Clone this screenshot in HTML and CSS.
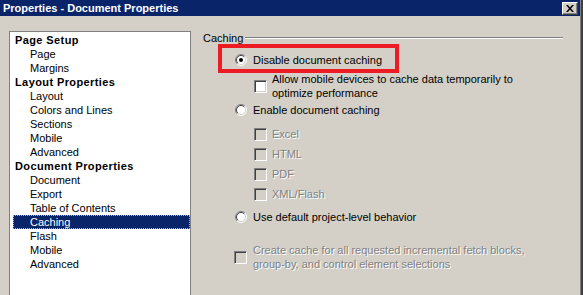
FILE: index.html
```html
<!DOCTYPE html>
<html lang="en">
<head>
  <meta charset="UTF-8">
  <title>Properties - Document Properties</title>
  <link rel="stylesheet" href="styles.css">
</head>
<body>

  <div class="window">
    <div class="titlebar">
      <span class="title">Properties - Document Properties</span>
      <span class="close">
        <svg width="8" height="7" viewBox="0 0 8 7">
          <path d="M0 0h2l2 2.5L6 0h2L5 3.5 8 7H6L4 4.5 2 7H0l3-3.5z" fill="#000"/>
        </svg>
      </span>
    </div>

    <div class="content">
      <ul class="nav">
        <li class="group">Page Setup</li>
        <li>Page</li>
        <li>Margins</li>
        <li class="group">Layout Properties</li>
        <li>Layout</li>
        <li>Colors and Lines</li>
        <li>Sections</li>
        <li>Mobile</li>
        <li>Advanced</li>
        <li class="group">Document Properties</li>
        <li>Document</li>
        <li>Export</li>
        <li>Table of Contents</li>
        <li class="selected">Caching</li>
        <li>Flash</li>
        <li>Mobile</li>
        <li>Advanced</li>
      </ul>

      <div class="panel">
        <div class="legend">
          <span>Caching</span>
          <span class="rule"></span>
        </div>

        <!-- red annotation box drawn over the first option -->
        <div class="mark"></div>

        <div class="option radio-row first">
          <svg class="radio" width="12" height="12" viewBox="0 0 12 12">
            <circle cx="6" cy="6" r="5" fill="#fff"/>
            <path d="M2.1 9.9A5.5 5.5 0 0 1 9.9 2.1" fill="none" stroke="#808080"/>
            <path d="M9.9 2.1A5.5 5.5 0 0 1 2.1 9.9" fill="none" stroke="#fff"/>
            <path d="M2.8 9.2A4.5 4.5 0 0 1 9.2 2.8" fill="none" stroke="#404040"/>
            <path d="M9.2 2.8A4.5 4.5 0 0 1 2.8 9.2" fill="none" stroke="#d4d0c8"/>
            <circle cx="6" cy="6" r="2" fill="#000"/>
          </svg>
          <span>Disable document caching</span>
        </div>

        <div class="option check-row sub allow">
          <span class="box"></span>
          <span>Allow mobile devices to cache data temporarily to<br>optimize performance</span>
        </div>

        <div class="option radio-row enable">
          <svg class="radio" width="12" height="12" viewBox="0 0 12 12">
            <circle cx="6" cy="6" r="5" fill="#fff"/>
            <path d="M2.1 9.9A5.5 5.5 0 0 1 9.9 2.1" fill="none" stroke="#808080"/>
            <path d="M9.9 2.1A5.5 5.5 0 0 1 2.1 9.9" fill="none" stroke="#fff"/>
            <path d="M2.8 9.2A4.5 4.5 0 0 1 9.2 2.8" fill="none" stroke="#404040"/>
            <path d="M9.2 2.8A4.5 4.5 0 0 1 2.8 9.2" fill="none" stroke="#d4d0c8"/>
          </svg>
          <span>Enable document caching</span>
        </div>

        <div class="formats">
          <div class="option check-row sub disabled"><span class="box"></span><span>Excel</span></div>
          <div class="option check-row sub disabled"><span class="box"></span><span>HTML</span></div>
          <div class="option check-row sub disabled"><span class="box"></span><span>PDF</span></div>
          <div class="option check-row sub disabled"><span class="box"></span><span>XML/Flash</span></div>
        </div>

        <div class="option radio-row usedefault">
          <svg class="radio" width="12" height="12" viewBox="0 0 12 12">
            <circle cx="6" cy="6" r="5" fill="#fff"/>
            <path d="M2.1 9.9A5.5 5.5 0 0 1 9.9 2.1" fill="none" stroke="#808080"/>
            <path d="M9.9 2.1A5.5 5.5 0 0 1 2.1 9.9" fill="none" stroke="#fff"/>
            <path d="M2.8 9.2A4.5 4.5 0 0 1 9.2 2.8" fill="none" stroke="#404040"/>
            <path d="M9.2 2.8A4.5 4.5 0 0 1 2.8 9.2" fill="none" stroke="#d4d0c8"/>
          </svg>
          <span>Use default project-level behavior</span>
        </div>

        <div class="option check-row disabled create">
          <span class="box"></span>
          <span>Create cache for all requested incremental fetch blocks,<br>group-by, and control element selections</span>
        </div>
      </div>
    </div>
  </div>

</body>
</html>
```

FILE: styles.css
```css
html, body {
  margin: 0;
  padding: 0;
}
body {
  font-family: "Liberation Sans", Arial, sans-serif;
  font-size: 11px;
  line-height: 14px;
  color: #000;
  background: #d4d0c8;
}
.window {
  width: 583px;
  height: 295px;
  box-sizing: border-box;
  overflow: hidden;
  background: #d4d0c8;
  border-right: 2px solid #404040;
  box-shadow: inset -1px 0 #808080;
}
.titlebar {
  height: 16px;
  margin-right: 1px;
  background: #0a246a;
  color: #fff;
  display: flex;
  align-items: center;
  justify-content: space-between;
  padding-left: 3px;
  padding-right: 2px;
}
.title {
  font-weight: bold;
  font-size: 11px;
}
.close {
  width: 16px;
  height: 13px;
  box-sizing: border-box;
  background: #d4d0c8;
  border: 1px solid;
  border-color: #fff #404040 #404040 #fff;
  box-shadow: inset -1px -1px #808080;
  display: flex;
  align-items: center;
  justify-content: center;
  margin-top: 1px;
}
.content {
  display: flex;
  padding: 15px 0 0 9px;
}
.nav {
  list-style: none;
  margin: 0;
  padding: 1px 0 0 3px;
  width: 182px;
  height: 300px;
  box-sizing: border-box;
  background: #fff;
  border: 1px solid #808080;
}
.nav li {
  height: 14px;
  padding-left: 17px;
  white-space: nowrap;
}
.nav li.group {
  font-weight: bold;
  padding-left: 2px;
  letter-spacing: 0.4px;
}
.nav li.selected {
  background: #0a246a;
  color: #fff;
  outline: 1px dotted #c9b66a;
  outline-offset: -1px;
}
.panel {
  position: relative;
  flex: 1;
  padding-left: 12px;
}
.legend {
  display: flex;
  align-items: center;
  height: 14px;
  margin-right: 18px;
}
.rule {
  flex: 1;
  height: 1px;
  margin-left: 2px;
  margin-top: -1px;
  background: #808080;
  border-bottom: 1px solid #fff;
}
.mark {
  position: absolute;
  left: 27px;
  top: 13px;
  width: 181px;
  height: 29px;
  box-sizing: border-box;
  border: 4px solid #ed1c24;
}
.option {
  display: flex;
  align-items: center;
  white-space: nowrap;
}
.radio-row {
  padding-left: 32px;
  gap: 6px;
  height: 14px;
}
.check-row {
  gap: 5px;
}
.check-row.sub {
  padding-left: 51px;
}
.box {
  width: 13px;
  height: 13px;
  box-sizing: border-box;
  flex: none;
  background: #fff;
  border: 1px solid;
  border-color: #808080 #fff #fff #808080;
  box-shadow: inset 1px 1px #404040, inset -1px -1px #d4d0c8;
}
.disabled {
  color: #808080;
  text-shadow: 1px 1px 0 #fff;
}
.disabled .box {
  background: #d4d0c8;
}
.first {
  margin-top: 8px;
}
.allow {
  margin-top: 5px;
}
.enable {
  margin-top: 3px;
}
.formats {
  display: flex;
  flex-direction: column;
  gap: 6px;
  margin-top: 10px;
}
.formats .option {
  height: 14px;
}
.usedefault {
  margin-top: 9px;
}
.create {
  margin-top: 19px;
  padding-left: 31px;
  gap: 6px;
}
```
